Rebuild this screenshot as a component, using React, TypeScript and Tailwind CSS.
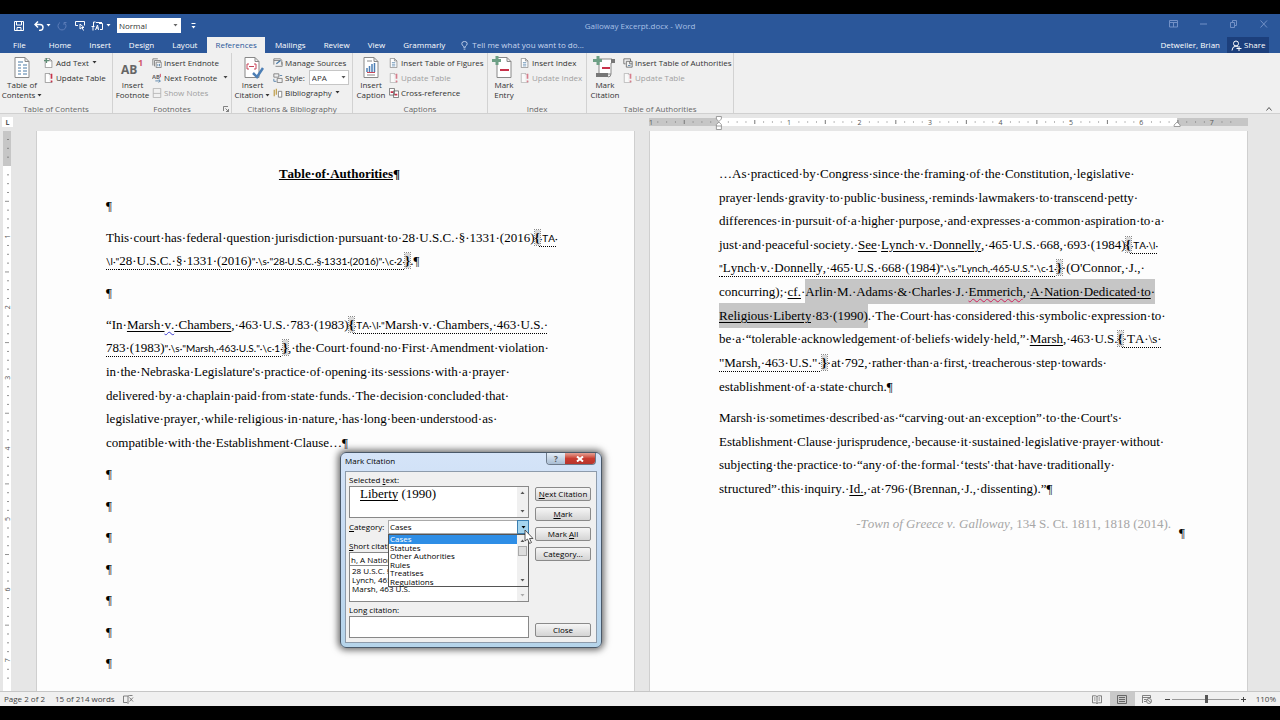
import type { ReactNode } from "react";

const kinds = {
    n: "",
    u: "underline decoration-1 underline-offset-2",
    wavy: "underline decoration-[#d0205a] decoration-wavy decoration-1 underline-offset-2",
    v: "underline decoration-[#3b3bd0] decoration-wavy decoration-1 underline-offset-2",
    d: "underline decoration-dotted decoration-1 underline-offset-4",
    f: "font-['Lato',sans-serif] text-[10px] underline decoration-dotted decoration-1 underline-offset-4",
    b: "font-bold bg-[#d9d9d9] outline-1 outline-dotted outline-[#888]",
    s: "bg-[#c6c6c6] py-[5px]",
    su: "bg-[#c6c6c6] py-[5px] underline decoration-1 underline-offset-2",
    sw: "bg-[#c6c6c6] py-[5px] underline decoration-[#d0205a] decoration-wavy decoration-1 underline-offset-2",
}

type Seg = [keyof typeof kinds, string];

const jurisdiction: Seg[][] = [
    [["n", "This court has federal question jurisdiction pursuant to 28 U.S.C. § 1331 (2016)"], ["b", "{"], ["f", " TA "]],
    [["f", "\\l \""], ["d", "28 U.S.C. § 1331 (2016)"], ["f", "\" \\s \"28 U.S.C. § 1331 (2016)\" \\c 2 "], ["b", "}"], ["n", ".¶"]],
];

const marsh: Seg[][] = [
    [["n", "“In "], ["u", "Marsh "], ["v", "v."], ["u", " Chambers"], ["n", ", 463 U.S. 783 (1983)"], ["b", "{"], ["f", " TA \\l \""], ["d", "Marsh v. Chambers, 463 U.S. "]],
    [["d", "783 (1983)"], ["f", "\" \\s \"Marsh, 463 U.S.\" \\c 1 "], ["b", "}"], ["n", ", the Court found no First Amendment violation "]],
    [["n", "in the Nebraska Legislature's practice of opening its sessions with a prayer "]],
    [["n", "delivered by a chaplain paid from state funds. The decision concluded that "]],
    [["n", "legislative prayer, while religious in nature, has long been understood as "]],
    [["n", "compatible with the Establishment Clause…¶"]],
];

const practiced: Seg[][] = [
    [["n", "…As practiced by Congress since the framing of the Constitution, legislative "]],
    [["n", "prayer lends gravity to public business, reminds lawmakers to transcend petty "]],
    [["n", "differences in pursuit of a higher purpose, and expresses a common aspiration to a "]],
    [["n", "just and peaceful society. "], ["u", "See"], ["n", " "], ["u", "Lynch v. Donnelly"], ["n", ", 465 U.S. 668, 693 (1984)"], ["b", "{"], ["f", " TA \\l "]],
    [["f", "\""], ["d", "Lynch v. Donnelly, 465 U.S. 668 (1984)"], ["f", "\" \\s \"Lynch, 465 U.S.\" \\c 1 "], ["b", "}"], ["n", " (O'Connor, J., "]],
    [["n", "concurring); "], ["u", "cf."], ["n", " "], ["s", "Arlin M. Adams & Charles J. "], ["sw", "Emmerich"], ["s", ", "], ["su", "A Nation Dedicated to"], ["s", " "]],
    [["su", "Religious Liberty"], ["s", " 83 (1990)"], ["n", ". The Court has considered this symbolic expression to "]],
    [["n", "be a “tolerable acknowledgement of beliefs widely held,” "], ["u", "Marsh"], ["n", ", 463 U.S."], ["b", "{"], ["d", " TA \\s "]],
    [["d", "\"Marsh, 463 U.S.\" "], ["b", "}"], ["n", " at 792, rather than a first, treacherous step towards "]],
    [["n", "establishment of a state church.¶"]],
];

const described: Seg[][] = [
    [["n", "Marsh is sometimes described as “carving out an exception” to the Court's "]],
    [["n", "Establishment Clause jurisprudence, because it sustained legislative prayer without "]],
    [["n", "subjecting the practice to “any of the formal ‘tests' that have traditionally "]],
    [["n", "structured” this inquiry. "], ["u", "Id."], ["n", ", at 796 (Brennan, J., dissenting).”¶"]],
];

function Paragraph({ lines, className }: { lines: Seg[][], className: string }) {
    return <div className={"grid auto-rows-fr whitespace-pre " + className}>
        {lines.map((line, i) => <div key={i} className="flex flex-col justify-center">
            <p>{line.map(([kind, text], j) => <span key={j} className={kinds[kind]}>{text.replaceAll(" ", "·")}</span>)}</p>
        </div>)}
    </div>
}

function Caret({ className = "" }: { className?: string }) {
    return <svg viewBox="0 0 5 3" className={"h-[3px] w-[5px] shrink-0 " + className} fill="currentColor"><path d="M0.5 0h4L2.5 2.5z" /></svg>
}

const page = <path d="M1.5.5h5l3 3v8h-8z M6.5.5v3h3" fill="#fff" stroke="#777" strokeWidth=".8" />

function Small({ icon, label, off, caret }: { icon: ReactNode, label: string, off?: boolean, caret?: boolean }) {
    return <button className={"flex h-[15px] items-center gap-[2px] " + (off ? "text-[#a0a0a0]" : "text-[#333]")}>
        <svg viewBox="0 0 12 12" className={"h-[10px] w-[10px] shrink-0 " + (off ? "opacity-60" : "")} fill="none">{icon}</svg>
        {label}
        {caret && <Caret className="ml-px" />}
    </button>
}

function Big({ icon, top, bottom, caret }: { icon: ReactNode, top: string, bottom: string, caret?: boolean }) {
    return <button className="flex flex-col items-center pt-px leading-[10px] text-[#333]">
        <svg viewBox="0 0 24 24" className="h-6 w-6" fill="none">{icon}</svg>
        <span>{top}</span>
        <span className="flex items-center gap-[2px]">{bottom}{caret && <Caret />}</span>
    </button>
}

function Group({ label, width, bigWidth, big, children, corner }: { label: string, width: string, bigWidth: string, big: ReactNode, children: ReactNode, corner?: boolean }) {
    return <section className={"relative flex flex-col border-r border-[#d2d2d2] pt-[2px] " + width}>
        <div className="flex h-[46px]">
            <div className={"flex shrink-0 justify-center " + bigWidth}>{big}</div>
            <div className="flex flex-col items-start">{children}</div>
        </div>
        <h2 className="h-3 pt-1 text-center leading-none text-[#666]">{label}</h2>
        {corner && <button aria-label="Footnote settings" className="absolute right-[2px] bottom-[1px] text-[#666]">
            <svg viewBox="0 0 6 6" className="h-[6px] w-[6px]" fill="none" stroke="currentColor" strokeWidth=".8"><path d="M.5 5V.5H5M2.5 2.5l3 3M5.5 3v2.5H3" /></svg>
        </button>}
    </section>
}

const bigPage = <path d="M5 1.500h10l4 4v16H5z M15 1.500v4h4" fill="#fff" stroke="#888" />
const updateIcon = <>{page}<path d="M6 2h6v8H6z" fill="#f3f3f3" /><path d="M9 1v6M9 9v2" stroke="#c8324a" strokeWidth="2" /></>

function Ribbon() {
    return <div className="flex h-[61px] border-b border-[#d0d0d0] bg-[#f0f0f0]">
        <Group label="Table of Contents" width="w-[113px]" bigWidth="w-11" big={
            <Big top="Table of" bottom="Contents" caret icon={<>{bigPage}<path d="M8 6h5M8 9h3M13 9h4M8 12h3M13 12h4M8 15h3M13 15h4M8 18h3M13 18h4" stroke="#4a7ba6" /></>} />
        }>
            <Small label="Add Text" caret icon={<>{page}<path d="M3 0v6M0 3h6" stroke="#5e8d75" strokeWidth="1.500" /></>} />
            <Small label="Update Table" icon={updateIcon} />
        </Group>
        <Group label="Footnotes" width="w-[119px]" bigWidth="w-[39px]" corner big={
            <Big top="Insert" bottom="Footnote" icon={<>
                <text x="1" y="18" fontSize="12" fontWeight="bold" fill="#666">AB</text>
                <text x="18" y="10" fontSize="9" fontWeight="bold" fill="#d0566a">1</text>
            </>} />
        }>
            <Small label="Insert Endnote" icon={<><path d="M1 9V1h6M3 10V3h7v6" stroke="#777" /><path d="M5 5h6v6.500H5z" fill="#fff" stroke="#777" /><path d="M7 7v3M9 7v3" stroke="#4a7ba6" /></>} />
            <div className="flex w-[76px] items-center justify-between text-[#444]">
                <Small label="Next Footnote" icon={<><text x="0" y="7" fontSize="7" fontWeight="bold" fill="#666">AB</text><path d="M10 1v4" stroke="#c8324a" /><path d="M4 9.500h6M8 7.500l2 2-2 2" stroke="#4a7ba6" /></>} />
                <Caret />
            </div>
            <Small label="Show Notes" off icon={<path d="M1.500.5h9v11h-9zM1.500 6.500h9" stroke="#888" />} />
        </Group>
        <Group label="Citations & Bibliography" width="w-[121px]" bigWidth="w-[41px]" big={
            <Big top="Insert" bottom="Citation" caret icon={<>{bigPage}<path d="M7 8v5h2M7 8h2M16 8v5h-2M16 8h-2M9 10.500h5" stroke="#c8465a" /><path d="M13 17l4 4 6-9" stroke="#4d7fb5" strokeWidth="2.500" /></>} />
        }>
            <Small label="Manage Sources" icon={<><path d="M1 8V1h8l1.500 2v5M1 3h8M3 10h8V5" stroke="#777" /><path d="M4 7l5-4" stroke="#4a7ba6" strokeWidth="1.500" /></>} />
            <div className="flex items-center gap-1">
                <Small label="Style:" icon={<><path d="M1 1h6v4H1zM5 6.500h6v5H5z" stroke="#777" /><path d="M1 7v3h3M8 3h3" stroke="#4a7ba6" /></>} />
                <div className="relative flex items-center">
                    <select aria-label="Style" className="h-[15px] w-10 appearance-none border border-[#c6c6c6] bg-white pl-[2px] text-[#333]"><option>APA</option></select>
                    <Caret className="pointer-events-none absolute right-[3px] text-[#555]" />
                </div>
            </div>
            <Small label="Bibliography" caret icon={<><path d="M1.500 2v8M4 1v7" stroke="#c0a050" strokeWidth="1.500" /><path d="M6.500 4h4v7h-4z" fill="#fff" stroke="#777" /></>} />
        </Group>
        <Group label="Captions" width="w-[135px]" bigWidth="w-9" big={
            <Big top="Insert" bottom="Caption" icon={<>{bigPage}<path d="M8 5h5M8 19h8" stroke="#888" /><path d="M8 16v-4M10.500 16v-6M13 16V8M15.500 16v-9" stroke="#4d7fb5" strokeWidth="1.500" /><path d="M8 16.500h8" stroke="#c8465a" /></>} />
        }>
            <Small label="Insert Table of Figures" icon={<>{page}<path d="M3.500 5.500h4M3.500 7.500h4M3.500 9.500h4" stroke="#4a7ba6" strokeWidth=".8" /></>} />
            <Small label="Update Table" off icon={updateIcon} />
            <Small label="Cross-reference" icon={<><path d="M.5.5h6v8h-6zM5.500 3.500h6v8h-6z" fill="#fff" stroke="#666" /><path d="M2 5h3M7 8h3" stroke="#c8324a" strokeWidth="2" /></>} />
        </Group>
        <Group label="Index" width="w-[99px]" bigWidth="w-8" big={
            <Big top="Mark" bottom="Entry" icon={<>{bigPage}<path d="M8 14h9" stroke="#c8324a" strokeWidth="2" /><path d="M5 0v9M0 4.500h9" stroke="#6d9f85" strokeWidth="3" /></>} />
        }>
            <Small label="Insert Index" icon={<>{page}<path d="M3.500 5.500h4M3.500 7.500h4M3.500 9.500h4" stroke="#4a7ba6" strokeWidth=".8" /></>} />
            <Small label="Update Index" off icon={updateIcon} />
        </Group>
        <Group label="Table of Authorities" width="w-[147px]" bigWidth="w-9" big={
            <Big top="Mark" bottom="Citation" icon={<><path d="M6 3h13v4h-1v11H6z" fill="#fff" stroke="#888" /><path d="M18 3h4v4h-4zM3 17h12v4H3z" fill="#777" /><path d="M15 21q3 0 3-3" stroke="#888" /><path d="M9 12h8" stroke="#c8324a" strokeWidth="2" /><path d="M5 0v9M0 4.500h9" stroke="#6d9f85" strokeWidth="3" /></>} />
        }>
            <Small label="Insert Table of Authorities" icon={<><path d="M1 1h8v3M1 1v6h2M4 4h7v7H4zM8 4v3h3" stroke="#666" /><path d="M6 9h3" stroke="#4a7ba6" /></>} />
            <Small label="Update Table" off icon={updateIcon} />
        </Group>
        <button aria-label="Collapse ribbon" className="mt-auto mr-2 mb-px ml-auto text-[#555]">
            <svg viewBox="0 0 6 6" className="h-[6px] w-[6px]" fill="none" stroke="currentColor"><path d="M.5 4.500l2.500-3 2.500 3" /></svg>
        </button>
    </div>
}

function TitleBar() {
    return <div className="grid h-[23px] grid-cols-[1fr_auto_1fr] items-center text-white">
        <div className="flex items-center pl-[14px]">
            <button aria-label="Save"><svg viewBox="0 0 10 10" className="h-[10px] w-[10px]" fill="none" stroke="currentColor"><path d="M.5.5h9v9h-9zM2.500.5v3.500h5V.5M3 9.500V6.500h4v3" /></svg></button>
            <button aria-label="Undo" className="ml-[10px]"><svg viewBox="0 0 10 10" className="h-[10px] w-[10px]" fill="none" stroke="currentColor" strokeWidth="1.500"><path d="M4 .5L1 3.500l3 3M1 3.500h5q3 0 3 3T5 9.500" /></svg></button>
            <Caret className="ml-[2px]" />
            <button aria-label="Redo" className="ml-[6px] text-[#5b7cb8]"><svg viewBox="0 0 10 10" className="h-[10px] w-[10px]" fill="none" stroke="currentColor"><path d="M3 1.500a4 4 0 1 0 4 0M7 4V1.500h2.500" /></svg></button>
            <button aria-label="Format" className="ml-[8px]"><svg viewBox="0 0 11 11" className="h-[11px] w-[11px]" fill="none" stroke="currentColor"><path d="M3 5.500H.5v-4h9v4M5 4v5l2-1.500 1.500 3M5 4l4 3.500H7" /></svg></button>
            <button aria-label="Field codes" className="ml-[5px]"><svg viewBox="0 0 12 10" className="h-[10px] w-3" fill="none" stroke="currentColor"><path d="M2 9.500v-4M.5 5.500h3M4.500 1h-2v4M4.500 9l2-5 1 5M5 7h2.500M8 2.500h3.500v6H9M5 1.500h6" /></svg></button>
            <Caret className="ml-[3px]" />
            <div className="relative ml-[6px] flex items-center">
                <select aria-label="Paragraph style" className="h-[15px] w-16 appearance-none bg-white pl-[2px] text-[8px] text-[#333]"><option>Normal</option></select>
                <Caret className="pointer-events-none absolute right-[3px] text-[#666]" />
            </div>
            <svg viewBox="0 0 5 6" className="ml-[10px] h-[6px] w-[5px]" fill="currentColor"><path d="M.5 0h4v1h-4zM.5 3h4L2.500 5.500z" /></svg>
        </div>
        <h1 className="text-[#a9c0e6]">Galloway Excerpt.docx - Word</h1>
        <div className="flex items-center justify-end gap-[21px] pr-3 pb-1 text-[#7391c6]">
            <button aria-label="Ribbon display options"><svg viewBox="0 0 9 8" className="h-2 w-[9px]" fill="none" stroke="currentColor"><path d="M.5.5h8v6.500h-8zM.5 2.500h8M4.500 2.500V7" /></svg></button>
            <button aria-label="Minimize"><svg viewBox="0 0 9 8" className="h-2 w-[9px]" stroke="currentColor"><path d="M1 4h7" /></svg></button>
            <button aria-label="Restore"><svg viewBox="0 0 9 8" className="h-2 w-[9px]" fill="none" stroke="currentColor"><path d="M1.500 2.500h4v5h-4zM3.500 2V.5h4v5H6" /></svg></button>
            <button aria-label="Close window"><svg viewBox="0 0 9 8" className="h-2 w-[9px]" stroke="currentColor"><path d="M1.500.5l6.500 7M8 .5l-6.500 7" /></svg></button>
        </div>
    </div>
}

const tabs = ["Home", "Insert", "Design", "Layout", "References", "Mailings", "Review", "View", "Grammarly"];

function TabBar() {
    return <nav className="flex h-4 items-stretch text-white">
        <button className="mr-[15px] pl-[13px]">File</button>
        <div className="flex gap-[2px]">
            {tabs.map(tab => <button key={tab} className={"px-2 " + (tab === "References" ? "bg-[#f0f0f0] text-[#2b579a]" : "")}>{tab}</button>)}
        </div>
        <button className="ml-2 flex items-center gap-1 text-[#c8d6ee]">
            <svg viewBox="0 0 7 10" className="h-[9px] w-[7px]" fill="none" stroke="currentColor"><path d="M2.500 7V6Q.5 4.500.5 3a3 2.500 0 0 1 6 0Q6.500 4.500 4.500 6v1zM2.500 9h2" /></svg>
            Tell me what you want to do...
        </button>
        <span className="mr-[7px] ml-auto self-center">Detweiler, Brian</span>
        <button className="mr-[11px] flex w-[42px] items-center gap-[2px] bg-[#1c3f7c] pl-1">
            <svg viewBox="0 0 11 11" className="h-[11px] w-[11px]" fill="none" stroke="currentColor"><circle cx="5" cy="3.500" r="2.500" /><path d="M1 10.500q0-4 4-4.500l2 1M8 6v5M5.500 8.500h5" /></svg>
            Share
        </button>
    </nav>
}

function HorizontalRuler() {
    const ticks = Array.from({ length: 67 }, (_, i) => i).filter(i => i % 8 !== 0);
    return <svg viewBox="0 0 600 16" className="h-4 w-full" preserveAspectRatio="none" aria-hidden="true">
        <path d="M0 4h600v8H0z" fill="#c6c6c6" />
        <path d="M70 4h459v8H70z" fill="#fff" />
        {ticks.map(i => <path key={i} d={i % 4 === 0 ? `M${i * 8.83} 6v4` : `M${i * 8.83} 7.500v1`} stroke="#777" />)}
        {["1", "", "1", "2", "3", "4", "5", "6", "7"].map((n, i) => <text key={i} x={i * 70.6 - (i === 0 ? 0 : 1)} y="11" fontSize="7" fill="#555" textAnchor={i ? "middle" : "start"}>{n}</text>)}
        <path d="M67.500 2.500h5v2.500l-2.500 2.500L67.500 5zM70 8l2.500 2.500v5h-5v-5zM67.500 12h5" fill="#fff" stroke="#888" strokeWidth=".8" />
        <path d="M529 8l3 3v1.500h-6V11z" fill="#fff" stroke="#888" strokeWidth=".8" />
    </svg>
}

function VerticalRuler() {
    const ticks = Array.from({ length: 62 }, (_, i) => i - 3).filter(i => i % 8 !== 0);
    return <svg viewBox="0 0 8 560" className="mt-1 ml-[3px] h-[560px] w-2" aria-hidden="true">
        <path d="M0 0h8v560H0z" fill="#fff" />
        <path d="M0 0h8v35H0z" fill="#c6c6c6" />
        {ticks.map(i => <path key={i} d={i % 4 === 0 ? `M2 ${35 + i * 8.83}h4` : `M4 ${35 + i * 8.83}h2`} stroke="#777" strokeWidth=".8" />)}
        {[1, 2, 3, 4, 5, 6, 7].map(n => <text key={n} transform={`translate(7 ${35 + n * 70.6}) rotate(-90)`} fontSize="7" fill="#555" textAnchor="middle">{n}</text>)}
    </svg>
}

function DialogButton({ children, className = "" }: { children: ReactNode, className?: string }) {
    return <button className={"h-[14px] rounded-xs border border-[#8a8a8a] bg-linear-to-b from-[#f6f6f6] to-[#d4d4d4] leading-none " + className}>{children}</button>
}

function ScrollArrow({ up, off }: { up?: boolean, off?: boolean }) {
    return <Caret className={(up ? "rotate-180 " : "") + (off ? "text-[#aaa]" : "text-[#555]")} />
}

const categories = ["Cases", "Statutes", "Other Authorities", "Rules", "Treatises", "Regulations"];

function MarkCitation() {
    return <div role="dialog" aria-label="Mark Citation" className="absolute top-[338px] left-[340px] z-10 h-[196px] w-[262px] rounded-md border border-[#4a5868] bg-linear-to-b from-[#d5e4f8] via-[#c3d9f2] to-[#b5d4ea] px-1 pb-1 text-[8px] leading-[10px] text-black shadow-[0_0_7px_2px_rgba(0,0,0,0.6)]">
        <div className="flex h-[18px] items-start justify-between">
            <h2 className="pt-[3px]">Mark Citation</h2>
            <div className="mr-px flex h-3 overflow-hidden rounded-b-sm border border-t-0 border-[#6d7a8a]">
                <button aria-label="Help" className="w-[18px] bg-linear-to-b from-[#e4edf7] to-[#a9bdd3] leading-[11px] font-bold text-[#555]">?</button>
                <button aria-label="Close" className="flex w-[30px] items-center justify-center bg-linear-to-b from-[#e4a094] via-[#c83c30] to-[#b8342c] text-white">
                    <svg viewBox="0 0 8 6" className="h-[6px] w-2" stroke="currentColor" strokeWidth="2"><path d="M1 .5l6 5M7 .5l-6 5" /></svg>
                </button>
            </div>
        </div>
        <div className="flex h-[172px] justify-between border border-[#8d9bab] bg-[#f0f0f0] pr-[5px] pl-[3px]">
            <div className="flex w-[180px] flex-col pt-[3px]">
                <label htmlFor="selected">Selected <u>t</u>ext:</label>
                <div className="relative mt-px flex h-8 border border-[#888] bg-white">
                    <input id="selected" readOnly defaultValue="Liberty (1990)" className="h-[14px] min-w-0 flex-1 pl-[10px] font-['Liberation_Serif',serif] text-[13px] outline-none" />
                    <span className="absolute top-[13px] left-[10px] h-px w-[38px] bg-black" />
                    <div className="flex w-[11px] flex-col items-center justify-between bg-[#f0f0f0] py-1"><ScrollArrow up /><ScrollArrow /></div>
                </div>
                <div className="relative mt-[2px] flex items-center">
                    <label htmlFor="category" className="w-[39px]"><u>C</u>ategory:</label>
                    <select id="category" className="h-[14px] min-w-0 flex-1 appearance-none border border-[#aaa] bg-white pl-[1px]">
                        {categories.map(c => <option key={c}>{c}</option>)}
                    </select>
                    <span className="pointer-events-none absolute right-0 flex h-[14px] w-3 items-center justify-center border border-[#3c7fb1] bg-[#a5d5ef]"><Caret /></span>
                    <div className="absolute top-[14px] right-0 z-10 flex h-[53px] w-[141px] border border-[#555] bg-white">
                        <ul role="listbox" aria-label="Categories" className="grid flex-1 auto-rows-fr leading-[8px]">
                            {categories.map((c, i) => <li key={c} role="option" aria-selected={i === 0} className={"pl-px " + (i === 0 ? "bg-[#2e8ee6] text-white" : "")}>{c}</li>)}
                        </ul>
                        <div className="flex w-[11px] flex-col items-center justify-between bg-[#f0f0f0] py-1">
                            <ScrollArrow up /><span className="-mt-1 mb-4 h-[10px] w-[9px] border border-[#aaa] bg-[#ddd]" /><ScrollArrow />
                        </div>
                    </div>
                </div>
                <label htmlFor="short" className="mt-[7px]"><u>S</u>hort citation:</label>
                <input id="short" defaultValue="h, A Nation Dedicated" className="mt-px h-[14px] border border-[#888] bg-white pl-px outline-none" />
                <div className="flex h-9 border border-t-0 border-[#888] bg-white">
                    <ul className="flex-1 pl-[2px] leading-[9px]">
                        <li>28 U.S.C. § 1331 (2016)</li>
                        <li>Lynch, 465 U.S.</li>
                        <li>Marsh, 463 U.S.</li>
                    </ul>
                    <div className="flex w-[11px] flex-col items-center justify-end bg-[#f0f0f0] pb-1"><ScrollArrow off /></div>
                </div>
                <label htmlFor="long" className="mt-[3px]">Long citation:</label>
                <textarea id="long" className="mt-px h-[22px] resize-none border border-[#888] bg-white outline-none" />
            </div>
            <div className="flex w-14 flex-col gap-[6px] pt-[15px] pb-[5px]">
                <DialogButton><u>N</u>ext Citation</DialogButton>
                <DialogButton><u>M</u>ark</DialogButton>
                <DialogButton>Mark <u>A</u>ll</DialogButton>
                <DialogButton>Cate<u>g</u>ory...</DialogButton>
                <DialogButton className="mt-auto">Close</DialogButton>
            </div>
        </div>
        <svg viewBox="0 0 10 16" className="absolute top-[76px] left-[183px] z-20 h-4 w-[10px]" fill="#fff" stroke="#333" strokeWidth=".8"><path d="M1 1v11l2.500-2 2 4.500 2-1-2-4h3.500z" /></svg>
    </div>
}

function StatusBar() {
    return <footer className="flex h-[15px] items-center border-t border-[#c6c6c6] bg-[#f0f0f0] pl-1 text-[#444]">
        <span>Page 2 of 2</span>
        <span className="ml-[10px]">15 of 214 words</span>
        <svg viewBox="0 0 11 9" className="ml-2 h-[9px] w-[11px]" fill="none" stroke="#666" strokeWidth=".8"><path d="M5 1H.5v6.500H4l1 1V1l1.500-.5H9.500M6.500 2.500l3.500 4M10 2.500l-3.500 4" /></svg>
        <div className="ml-auto flex h-full items-center">
            <button aria-label="Read mode" className="flex h-full w-[25px] items-center justify-center"><svg viewBox="0 0 10 9" className="h-[9px] w-[10px]" fill="none" stroke="#666" strokeWidth=".8"><path d="M5 1.500L3.500.8H.5v7h3L5 8.500l1.500-.7h3v-7h-3zM5 1.500v7M2 3h1.500M2 5h1.500M6.500 3H8M6.500 5H8" /></svg></button>
            <button aria-label="Print layout" className="flex h-full w-[25px] items-center justify-center bg-[#c9c9c9]"><svg viewBox="0 0 10 9" className="h-[9px] w-[10px]" fill="none" stroke="#666"><path d="M.5.5h9M.5 8.500h9M.5.5v8M9.500.5v8M2 2.500h6M2 4.500h6M2 6.500h6" /></svg></button>
            <button aria-label="Web layout" className="flex h-full w-[25px] items-center justify-center"><svg viewBox="0 0 10 9" className="h-[9px] w-[10px]" fill="none" stroke="#666" strokeWidth=".8"><path d="M.5 8V.5h8V3M.5 2.500h8M2 4.500h2.500M2 6.500h2" /><circle cx="7" cy="6" r="2.500" /><path d="M5 4.500l4 3" /></svg></button>
            <button aria-label="Zoom out" className="ml-[3px] w-[9px]"><svg viewBox="0 0 5 5" className="mx-auto h-[5px] w-[5px]" stroke="#444"><path d="M0 2.500h5" /></svg></button>
            <input type="range" aria-label="Zoom" min="10" max="200" defaultValue="110" className="h-[9px] w-[67px] appearance-none bg-[linear-gradient(#999,#999)] bg-[length:100%_1px] bg-center bg-no-repeat [&::-webkit-slider-thumb]:h-2 [&::-webkit-slider-thumb]:w-[3px] [&::-webkit-slider-thumb]:appearance-none [&::-webkit-slider-thumb]:bg-[#555]" />
            <button aria-label="Zoom in" className="w-[9px]"><svg viewBox="0 0 5 5" className="mx-auto h-[5px] w-[5px]" stroke="#444"><path d="M0 2.500h5M2.500 0v5" /></svg></button>
            <span className="mr-1 ml-2">110%</span>
        </div>
    </footer>
}

const sheet = "min-w-0 flex-1 border-x border-[#cfcfcf] bg-[#fdfdfd] pt-[31px] pl-[69px]";

export default function App() {
    return <div className="flex h-screen flex-col overflow-hidden bg-black font-['Open_Sans',sans-serif] text-[8px] leading-none">
        <header className="mt-[14px]">
            <div className="bg-[#2b579a]">
                <TitleBar />
                <TabBar />
            </div>
            <Ribbon />
        </header>
        <main className="relative flex min-h-0 flex-1 overflow-hidden bg-[#e6e6e6]">
            <aside className="w-9 shrink-0">
                <div className="mt-[3px] ml-[2px] flex h-[10px] w-[11px] items-center justify-center bg-white text-[7px] font-bold text-[#555]">L</div>
                <VerticalRuler />
            </aside>
            <div className="flex min-w-0 flex-1 flex-col pr-8">
                <div className="grid grid-cols-2 gap-[14px]">
                    <div />
                    <HorizontalRuler />
                </div>
                <div className="mt-px flex flex-1 gap-[14px] font-['Liberation_Serif',serif] text-[13px] leading-[23px] text-black [font-kerning:none]">
                    <article className={sheet}>
                        <h2 className="h-6 pr-[61px] text-center font-bold"><span className="underline">Table·of·Authorities</span>¶</h2>
                        <p className="my-2 h-6">¶</p>
                        <Paragraph lines={jurisdiction} className="h-[47px]" />
                        <p className="my-2 h-6">¶</p>
                        <Paragraph lines={marsh} className="h-[141px]" />
                        <div className="mt-1 grid h-[252px] auto-rows-fr">
                            {Array.from({ length: 8 }, (_, i) => <p key={i} className="pt-1">¶</p>)}
                        </div>
                    </article>
                    <article className={sheet}>
                        <Paragraph lines={practiced} className="h-[236px]" />
                        <Paragraph lines={described} className="mt-2 h-[94px]" />
                        <div className="mt-3 flex justify-end pr-[62px] text-[#a6a6a6]">
                            <p className="pr-2">-<i>Town of Greece v. Galloway</i>, 134 S. Ct. 1811, 1818 (2014).</p>
                            <span className="pt-[9px] text-black">¶</span>
                        </div>
                    </article>
                </div>
            </div>
            <MarkCitation />
        </main>
        <div className="mb-[14px]"><StatusBar /></div>
    </div>
}
